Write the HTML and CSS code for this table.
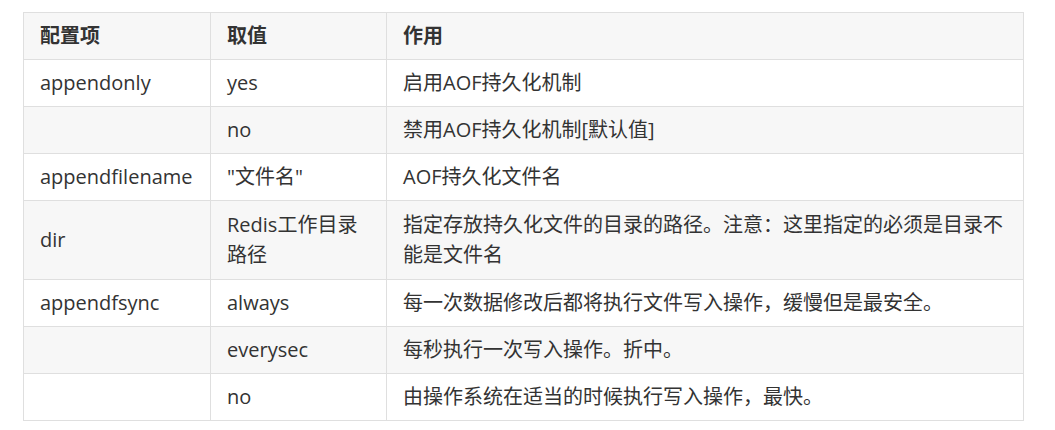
FILE: index.html
```html
<!DOCTYPE html>
<html lang="zh-CN">
<head>
<meta charset="utf-8">
<title>AOF 配置</title>
<link rel="stylesheet" href="styles.css">
</head>
<body>
<div class="page">
  <table class="cfg">
    <colgroup>
      <col class="c1"><col class="c2"><col class="c3">
    </colgroup>
    <thead>
      <tr><th>配置项</th><th>取值</th><th>作用</th></tr>
    </thead>
    <tbody>
      <tr><td>appendonly</td><td>yes</td><td>启用AOF持久化机制</td></tr>
      <tr class="alt"><td></td><td>no</td><td>禁用AOF持久化机制[默认值]</td></tr>
      <tr><td>appendfilename</td><td>"文件名"</td><td>AOF持久化文件名</td></tr>
      <tr class="alt tall"><td>dir</td><td>Redis工作目录路径</td><td>指定存放持久化文件的目录的路径。注意：这里指定的必须是目录不能是文件名</td></tr>
      <tr><td>appendfsync</td><td>always</td><td>每一次数据修改后都将执行文件写入操作，缓慢但是最安全。</td></tr>
      <tr class="alt"><td></td><td>everysec</td><td>每秒执行一次写入操作。折中。</td></tr>
      <tr><td></td><td>no</td><td>由操作系统在适当的时候执行写入操作，最快。</td></tr>
    </tbody>
  </table>
</div>
</body>
</html>
```

FILE: styles.css
```css
html, body {
  margin: 0;
  padding: 0;
  background: #ffffff;
}
.page {
  padding: 12px 0 0 23px;
}
.cfg {
  width: 1000px;
  border-collapse: collapse;
  table-layout: fixed;
  font-family: "Open Sans", "Noto Sans CJK SC", sans-serif;
  font-size: 20px;
  line-height: 30px;
  color: #333333;
}
.c1 { width: 187px; }
.c2 { width: 176px; }
.c3 { width: 637px; }
.cfg th, .cfg td {
  border: 1px solid #dfdfdf;
  padding: 8px 16px;
  text-align: left;
  vertical-align: middle;
}
.cfg th {
  font-weight: 700;
  background: #f7f7f7;
  color: #333333;
}
.cfg tr.alt td {
  background: #f7f7f7;
}
.cfg tr.tall td {
  padding-top: 9px;
  padding-bottom: 9px;
}
```
